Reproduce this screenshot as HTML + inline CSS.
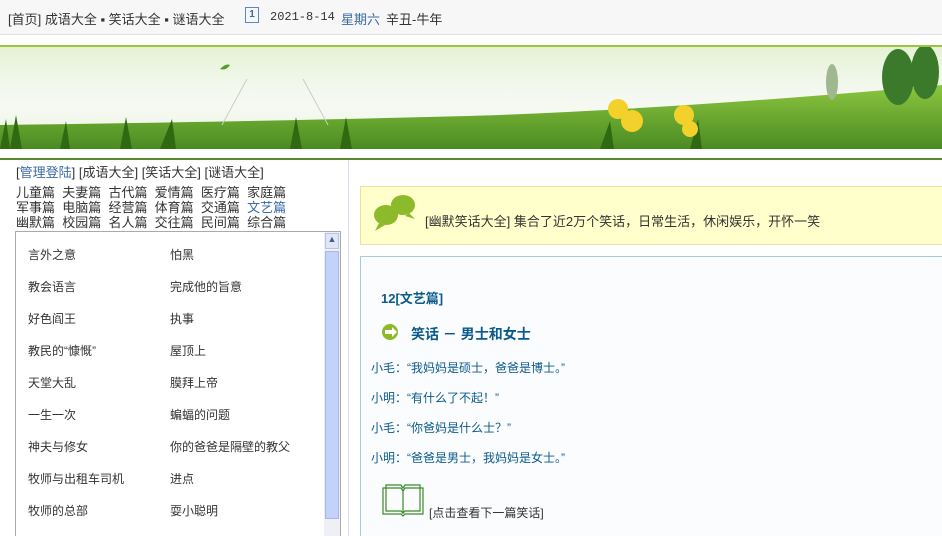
<!DOCTYPE html>
<html><head><meta charset="utf-8"><style>
html,body{margin:0;width:942px;height:536px;overflow:hidden}
body{background:#fff;font-family:"Liberation Sans","Noto Sans CJK SC",sans-serif;font-size:12px;color:#333;position:relative}
.a{position:absolute}
.top{left:0;top:0;width:942px;height:34px;background:#f7f7f7;border-bottom:1px solid #e2e2e2}
.top span{position:absolute;top:9px;font-size:13px;white-space:nowrap}
.bn{left:0;top:45px;width:942px;height:102px;border-top:2px solid #9bc53d;background:linear-gradient(#e4f2d4,#f3f8ee 40%,#f6f9f2 60%,#eaf3df);overflow:hidden}
.dl{left:0;top:158px;width:942px;height:2px;background:#5a8a2e}
.cat{left:16px;font-size:13px;line-height:14px;white-space:nowrap;color:#333}
.list{left:15px;top:231px;width:324px;height:310px;border:1px solid #aaa;background:#fff}
.it{position:absolute;font-size:12px;color:#333}
.c{color:#0b5a8a}
</style></head><body>
<div class="a top">
<span style="left:8px">[首页] 成语大全 ▪ 笑话大全 ▪ 谜语大全</span>
<span style="left:245px;top:7px;width:12px;height:14px;border:1px solid #5a88c0;font-size:10px;line-height:14px;text-align:center;color:#3a6aa8;font-weight:bold">1</span>
<span style="left:270px;font-family:'Liberation Mono',monospace;font-size:12px;top:10px">2021-8-14</span>
<span style="left:341px;color:#3a6aa8">星期六</span>
<span style="left:386px">辛丑-牛年</span>
</div>
<div class="a bn">
<svg width="942" height="102" style="position:absolute;left:0;top:0">
<defs><linearGradient id="g" x1="0" y1="0" x2="0" y2="1"><stop offset="0" stop-color="#8cc63f"/><stop offset="1" stop-color="#4a8a22"/></linearGradient></defs>
<path d="M0 78 Q300 74 500 68 Q700 60 942 38 L942 102 L0 102Z" fill="url(#g)"/>
<path d="M0 102 L6 72 L10 102 L16 68 L22 102 L60 102 L66 74 L70 102 L120 102 L126 70 L132 102 L160 102 L172 72 L176 102 L290 102 L296 70 L302 102 L340 102 L346 70 L352 102 L600 102 L610 74 L614 102 L690 102 L698 72 L702 102Z" fill="#2f6a12"/>
<g fill="#f2d12a"><circle cx="618" cy="62" r="10"/><circle cx="632" cy="74" r="11"/><circle cx="684" cy="68" r="10"/><circle cx="690" cy="82" r="8"/></g>
<g fill="#3b7a2a"><ellipse cx="898" cy="30" rx="16" ry="28"/><ellipse cx="925" cy="25" rx="14" ry="27"/><ellipse cx="832" cy="35" rx="6" ry="18" fill="#9fb890"/></g>
<path d="M220 22 q6-6 10-4 q-4 6-10 4z" fill="#5a9a2a"/>
<path d="M222 78 L247 32 M303 32 L328 78" stroke="#c8d0c0" stroke-width="1"/>
</svg></div>
<div class="a dl"></div>
<div class="a" style="left:348px;top:160px;width:1px;height:376px;background:#dde"></div>
<div class="a cat" style="top:166px">[<span style="color:#3a6aa8">管理登陆</span>] [成语大全] [笑话大全] [谜语大全]</div>
<div class="a cat" style="top:186px">儿童篇&nbsp; 夫妻篇&nbsp; 古代篇&nbsp; 爱情篇&nbsp; 医疗篇&nbsp; 家庭篇</div>
<div class="a cat" style="top:201px">军事篇&nbsp; 电脑篇&nbsp; 经营篇&nbsp; 体育篇&nbsp; 交通篇&nbsp; <span style="color:#3a6aa8">文艺篇</span></div>
<div class="a cat" style="top:216px">幽默篇&nbsp; 校园篇&nbsp; 名人篇&nbsp; 交往篇&nbsp; 民间篇&nbsp; 综合篇</div>
<div class="a list">
<div style="position:absolute;left:308px;top:0;width:16px;height:310px;background:#eef0f5"></div>
<div style="position:absolute;left:309px;top:1px;width:14px;height:16px;background:#dfe6f8;border:1px solid #b8c4e0;box-sizing:border-box;font-size:9px;text-align:center;color:#4a5a8a">▲</div>
<div style="position:absolute;left:309px;top:19px;width:14px;height:268px;background:#c3d2fa;border:1px solid #a9b8e0;box-sizing:border-box"></div>
<div class="it" style="left:12px;top:14px">言外之意</div><div class="it" style="left:154px;top:14px">怕黑</div>
<div class="it" style="left:12px;top:46px">教会语言</div><div class="it" style="left:154px;top:46px">完成他的旨意</div>
<div class="it" style="left:12px;top:78px">好色阎王</div><div class="it" style="left:154px;top:78px">执事</div>
<div class="it" style="left:12px;top:110px">教民的“慷慨”</div><div class="it" style="left:154px;top:110px">屋顶上</div>
<div class="it" style="left:12px;top:142px">天堂大乱</div><div class="it" style="left:154px;top:142px">膜拜上帝</div>
<div class="it" style="left:12px;top:174px">一生一次</div><div class="it" style="left:154px;top:174px">蝙蝠的问题</div>
<div class="it" style="left:12px;top:206px">神夫与修女</div><div class="it" style="left:154px;top:206px">你的爸爸是隔壁的教父</div>
<div class="it" style="left:12px;top:238px">牧师与出租车司机</div><div class="it" style="left:154px;top:238px">进点</div>
<div class="it" style="left:12px;top:270px">牧师的总部</div><div class="it" style="left:154px;top:270px">耍小聪明</div>
</div>
<div class="a" style="left:360px;top:186px;width:590px;height:59px;background:#ffffcc;border:1px solid #f0e0a0;box-sizing:border-box">
<svg width="48" height="40" style="position:absolute;left:10px;top:6px"><ellipse cx="32" cy="12" rx="12" ry="10" fill="#8cba2a"/><path d="M38 20 l6 6 l-10-3z" fill="#8cba2a"/><ellipse cx="15" cy="22" rx="12" ry="10" fill="#8cba2a"/><path d="M8 30 l-4 8 l10-6z" fill="#8cba2a"/></svg>
<div style="position:absolute;left:64px;top:24px;font-size:13px">[幽默笑话大全] 集合了近2万个笑话，日常生活，休闲娱乐，开怀一笑</div>
</div>
<div class="a" style="left:360px;top:256px;width:590px;height:290px;background:#fafcfd;border:1px solid #a8c8dc;box-sizing:border-box">
<div class="c" style="position:absolute;left:20px;top:31px;font-size:13px;font-weight:bold">12[文艺篇]</div>
<svg width="18" height="16" style="position:absolute;left:21px;top:67px"><circle cx="8" cy="8" r="8" fill="#8cba2a"/><path d="M3 6 h7 v-3 l5 5 l-5 5 v-3 h-7z" fill="#fff"/></svg>
<div class="c" style="position:absolute;left:50px;top:67px;font-size:14px;font-weight:bold">笑话 － 男士和女士</div>
<div class="c" style="position:absolute;left:10px;top:96px;line-height:30px;font-size:12px">小毛：“我妈妈是硕士，爸爸是博士。”<br>小明：“有什么了不起！”<br>小毛：“你爸妈是什么士？”<br>小明：“爸爸是男士，我妈妈是女士。”</div>
<svg width="44" height="34" style="position:absolute;left:20px;top:226px"><path d="M2 5 h18 l2 3 l2-3 h18 v26 h-18 l-2 2 l-2-2 h-18z M5 2 h15 l2 3 l2-3 h15 v26 h-15 l-2 2 l-2-2 h-15z M22 8 v23" fill="none" stroke="#3a8a2a" stroke-width="1.2"/></svg>
<div style="position:absolute;left:68px;top:247px">[点击查看下一篇笑话]</div>
</div>
</body></html>
